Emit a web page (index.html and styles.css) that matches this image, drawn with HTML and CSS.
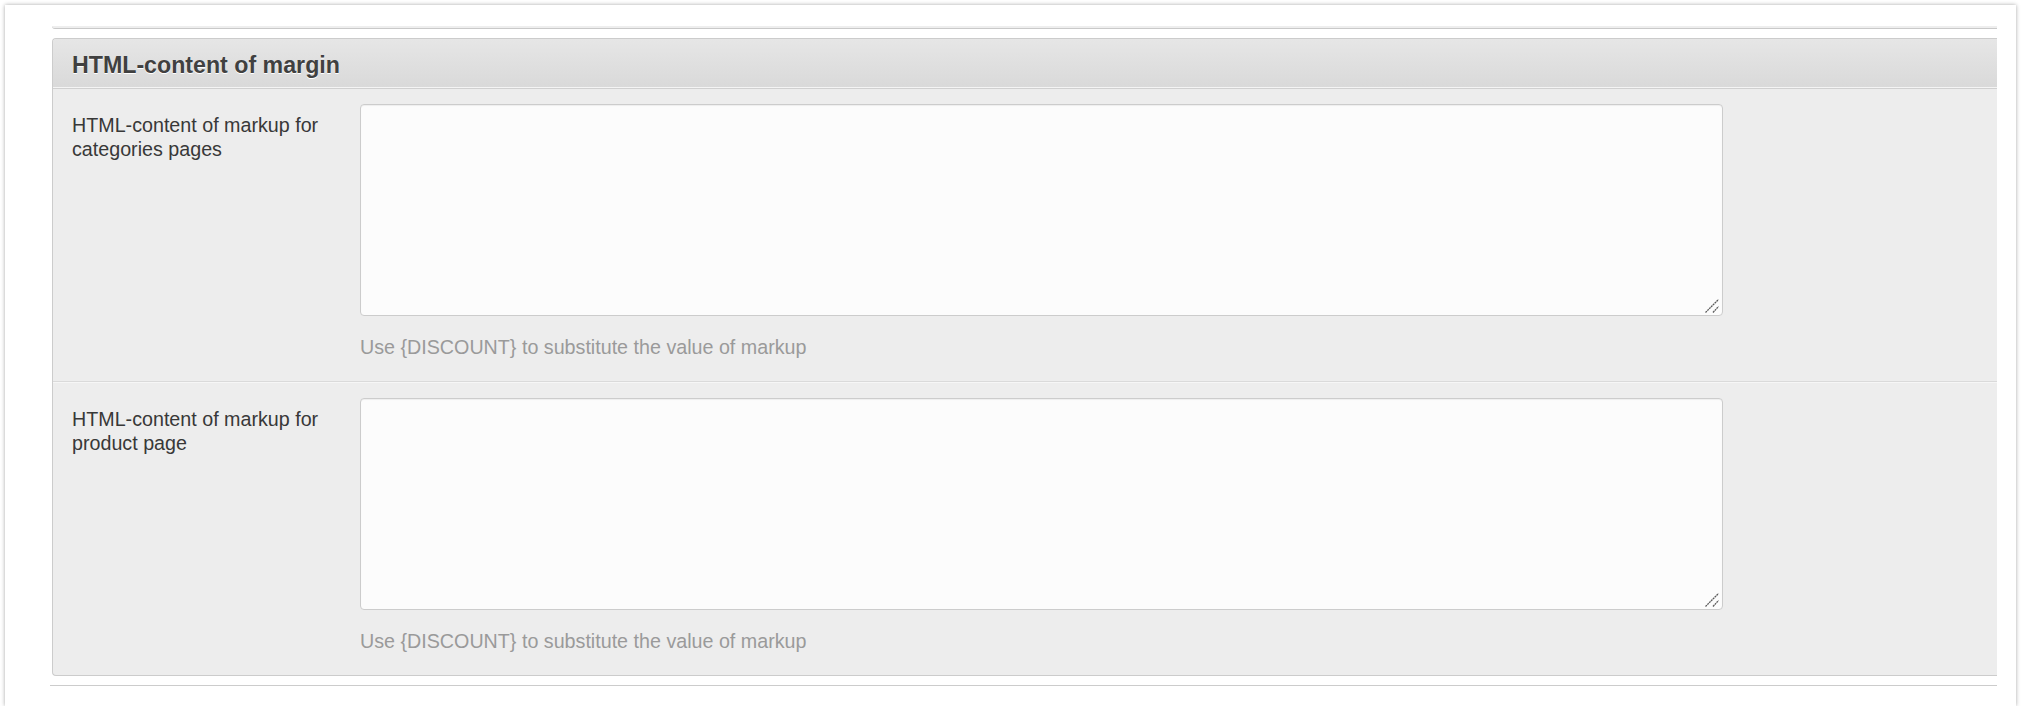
FILE: index.html
```html
<!DOCTYPE html>
<html>
<head>
<meta charset="utf-8">
<title>HTML-content of margin</title>
<link rel="stylesheet" href="styles.css">
</head>
<body>
<div class="frame">
  <div class="prev-panel"></div>
  <section class="panel">
    <header class="panel-head">HTML-content of margin</header>
    <div class="row">
      <label class="row-label" for="cat">HTML-content of markup for categories pages</label>
      <div class="row-field">
        <div class="field-wrap">
          <textarea id="cat" class="field"></textarea>
          <svg class="grip" width="16" height="16" viewBox="0 0 16 16" aria-hidden="true"><path d="M0.5 13.5 L13.5 0.5 M8 13.5 L13.5 7.5" stroke="#5a5a5a" stroke-width="1.3" stroke-dasharray="2 0.6" fill="none"/></svg>
        </div>
        <p class="help">Use {DISCOUNT} to substitute the value of markup</p>
      </div>
    </div>
    <div class="row">
      <label class="row-label" for="prod">HTML-content of markup for product page</label>
      <div class="row-field">
        <div class="field-wrap">
          <textarea id="prod" class="field"></textarea>
          <svg class="grip" width="16" height="16" viewBox="0 0 16 16" aria-hidden="true"><path d="M0.5 13.5 L13.5 0.5 M8 13.5 L13.5 7.5" stroke="#5a5a5a" stroke-width="1.3" stroke-dasharray="2 0.6" fill="none"/></svg>
        </div>
        <p class="help">Use {DISCOUNT} to substitute the value of markup</p>
      </div>
    </div>
  </section>
  <div class="bottom-rule"></div>
</div>
</body>
</html>
```
FILE: styles.css
```css
html, body {
  margin: 0;
  padding: 0;
  background: #ffffff;
}

body {
  font-family: "Liberation Sans", Arial, sans-serif;
  color: #333333;
}

.frame {
  box-sizing: border-box;
  margin: 5px 6px 0 5px;
  width: 2011px;
  height: 701px;
  padding: 21px 19px 0 47px;
  background: #ffffff;
  box-shadow: 0 0 4px rgba(0, 0, 0, 0.35);
  overflow: hidden;
}

.prev-panel {
  height: 2px;
  background: #eeeeee;
  border-bottom: 1px solid #c9c9c9;
  border-radius: 0 0 0 4px;
}

.panel {
  margin-top: 9px;
  border: 1px solid #cccccc;
  border-right: none;
  border-radius: 4px 0 0 4px;
  background: #ededed;
  overflow: hidden;
}

.panel-head {
  height: 50px;
  box-sizing: border-box;
  padding: 13px 19px 11px;
  line-height: 26px;
  font-size: 23.2px;
  font-weight: bold;
  color: #404040;
  text-shadow: 0 1px 0 #ffffff;
  background: linear-gradient(to bottom, #e6e6e6, #d9d9d9);
  border-bottom: 1px solid #d0d0d0;
  box-shadow: inset 0 -1px 0 #f4f4f4;
}

.row {
  display: grid;
  grid-template-columns: 288px 1363px;
  padding: 15px 19px 22px;
  border-bottom: 1px solid #dadada;
}

.row + .row {
  border-top: 1px solid #f6f6f6;
}

.row:last-child {
  border-bottom: none;
}

.row-label {
  display: block;
  margin-top: 10px;
  padding-right: 20px;
  font-size: 19.7px;
  line-height: 23.5px;
  color: #383838;
}

.row-field {
  display: flex;
  flex-direction: column;
}

.field-wrap {
  position: relative;
  width: 1363px;
  height: 212px;
}

.field {
  display: block;
  box-sizing: border-box;
  width: 1363px;
  height: 212px;
  margin: 0;
  padding: 6px 8px;
  border: 1px solid #cccccc;
  border-radius: 4px;
  background: #fcfcfc;
  box-shadow: inset 0 1px 1px rgba(0, 0, 0, 0.06);
  font-family: "Liberation Sans", Arial, sans-serif;
  font-size: 19.7px;
  resize: none;
}

.grip {
  position: absolute;
  right: 2px;
  bottom: 1px;
  pointer-events: none;
}

.help {
  margin: 19.5px 0 0;
  font-size: 19.7px;
  line-height: 23.5px;
  color: #9a9a9a;
}

.bottom-rule {
  margin: 9px 0 0 -2px;
  border-top: 1px solid #cccccc;
}
```
